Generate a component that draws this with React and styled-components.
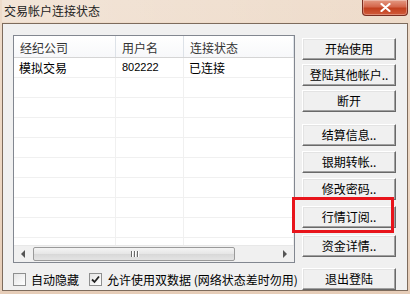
import styled, { createGlobalStyle } from "styled-components";

const GlobalStyle = createGlobalStyle`
  body {
    margin: 0;
    font-family: "Noto Sans CJK SC", "DejaVu Sans", sans-serif;
  }
`;

const columns = [
  { title: "经纪公司", width: 102 },
  { title: "用户名", width: 68 },
  { title: "连接状态", width: 110 },
];

const rows = [["模拟交易", "802222", "已连接"]];

const buttons = [
  { label: "开始使用", gap: 0 },
  { label: "登陆其他帐户..", gap: 4 },
  { label: "断开", gap: 4 },
  { label: "结算信息..", gap: 12 },
  { label: "银期转帐..", gap: 5 },
  { label: "修改密码..", gap: 5 },
  { label: "行情订阅..", gap: 6, marked: true },
  { label: "资金详情..", gap: 7 },
  { label: "退出登陆", gap: 11 },
];

export default function App() {
  return (
    <>
      <GlobalStyle />
      <Window>
        <TitleBar>
          <Title>交易帐户连接状态</Title>
          <CloseButton>
            <svg width="11" height="9" viewBox="0 0 11 9">
              <path
                d="M1.5 1 L9.5 8 M9.5 1 L1.5 8"
                stroke="#fff"
                strokeWidth="2.2"
                strokeLinecap="round"
              />
            </svg>
          </CloseButton>
        </TitleBar>
        <Client>
          <LeftColumn>
            <ListView>
              <HeaderRow>
                {columns.map((c) => (
                  <HeaderCell key={c.title} $width={c.width}>
                    {c.title}
                  </HeaderCell>
                ))}
              </HeaderRow>
              <Rows>
                {Array.from({ length: 10 }).map((_, i) => (
                  <Row key={i}>
                    {columns.map((c, j) => (
                      <Cell key={c.title} $width={c.width} $latin={j === 1}>
                        {rows[i] ? rows[i][j] : ""}
                      </Cell>
                    ))}
                  </Row>
                ))}
              </Rows>
              <ScrollBar>
                <ArrowBox>
                  <ArrowLeft />
                </ArrowBox>
                <Thumb>
                  <Grip />
                  <Grip />
                  <Grip />
                </Thumb>
                <Track />
                <ArrowBox>
                  <ArrowRight />
                </ArrowBox>
              </ScrollBar>
            </ListView>
            <OptionRow>
              <Option>
                <CheckBox />
                自动隐藏
              </Option>
              <Option>
                <CheckBox>
                  <svg width="9" height="9" viewBox="0 0 9 9">
                    <path
                      d="M1 4.5 L3.5 7 L8 1.5"
                      stroke="#222"
                      strokeWidth="1.8"
                      fill="none"
                    />
                  </svg>
                </CheckBox>
                允许使用双数据 (网络状态差时勿用)
              </Option>
            </OptionRow>
          </LeftColumn>
          <ButtonColumn>
            {buttons.map((b) => (
              <ButtonSlot key={b.label} $gap={b.gap} $marked={b.marked}>
                <ActionButton>{b.label}</ActionButton>
              </ButtonSlot>
            ))}
          </ButtonColumn>
        </Client>
      </Window>
    </>
  );
}

const Window = styled.div`
  width: 410px;
  height: 294px;
  box-sizing: border-box;
  display: flex;
  flex-direction: column;
  background: linear-gradient(180deg, #eedccb 0%, #ecd6c2 60%, #e6cdb8 100%);
  padding: 0 2px 3px 2px;
`;

const TitleBar = styled.div`
  height: 22px;
  display: flex;
  align-items: flex-start;
  justify-content: space-between;
  background: linear-gradient(90deg, rgba(255, 255, 255, 0.25), rgba(255, 255, 255, 0));
`;

const Title = styled.div`
  font-size: 12px;
  line-height: 14px;
  margin: 4px 0 0 2px;
  color: #222;
`;

const CloseButton = styled.div`
  width: 46px;
  height: 16px;
  box-sizing: border-box;
  border: 1px solid #7a2e21;
  border-top: none;
  border-radius: 0 0 4px 4px;
  background: linear-gradient(180deg, #e49a83 0%, #d4674c 45%, #c2401f 55%, #d15b3a 100%);
  display: flex;
  align-items: center;
  justify-content: center;
  box-shadow: inset 0 0 0 1px rgba(255, 255, 255, 0.3);
`;

const Client = styled.div`
  flex: 1;
  display: flex;
  margin-top: 1px;
  border: 1px solid #7d6b5c;
  background: #f0f0f0;
  padding: 11px 0 0 10px;
  gap: 7px;
  overflow: hidden;
`;

const LeftColumn = styled.div`
  width: 282px;
  display: flex;
  flex-direction: column;
`;

const ListView = styled.div`
  height: 228px;
  flex: none;
  box-sizing: border-box;
  border: 1px solid #828790;
  background: #fff;
  display: flex;
  flex-direction: column;
  overflow: hidden;
`;

const HeaderRow = styled.div`
  display: flex;
  height: 21px;
  flex: none;
  border-bottom: 1px solid #d5d5d5;
  background: linear-gradient(180deg, #ffffff, #f7f8fa);
`;

const HeaderCell = styled.div`
  width: ${(p) => p.$width}px;
  flex: none;
  box-sizing: border-box;
  border-right: 1px solid #dde2e8;
  padding-left: 6px;
  font-size: 12px;
  line-height: 23px;
  color: #333;
`;

const Rows = styled.div`
  flex: 1;
  overflow: hidden;
`;

const Row = styled.div`
  display: flex;
  height: 19px;
  border-bottom: 1px solid #f0f0f0;
`;

const Cell = styled.div`
  width: ${(p) => p.$width}px;
  flex: none;
  box-sizing: border-box;
  border-right: 1px solid #f0f0f0;
  padding-left: ${(p) => (p.$latin ? 6 : 5)}px;
  font-size: ${(p) => (p.$latin ? 11 : 12)}px;
  font-family: ${(p) =>
    p.$latin ? '"Liberation Sans", Arial, sans-serif' : "inherit"};
  line-height: 19px;
  color: #000;
`;

const ScrollBar = styled.div`
  height: 16px;
  flex: none;
  display: flex;
  background: #f0f0f0;
  border-top: 1px solid #e8e8e8;
`;

const ArrowBox = styled.div`
  width: 18px;
  display: flex;
  align-items: center;
  justify-content: center;
`;

const ArrowLeft = styled.div`
  width: 0;
  height: 0;
  border-top: 4px solid transparent;
  border-bottom: 4px solid transparent;
  border-right: 4px solid #555;
`;

const ArrowRight = styled.div`
  width: 0;
  height: 0;
  border-top: 4px solid transparent;
  border-bottom: 4px solid transparent;
  border-left: 4px solid #555;
`;

const Thumb = styled.div`
  width: 202px;
  margin: 1px 0 1px 1px;
  box-sizing: border-box;
  border: 1px solid #9a9a9a;
  border-radius: 2px;
  background: linear-gradient(180deg, #f4f4f4 0%, #e6e6e6 50%, #d8d8d8 51%, #e4e4e4 100%);
  display: flex;
  align-items: center;
  justify-content: center;
  gap: 2px;
`;

const Grip = styled.div`
  width: 1px;
  height: 6px;
  background: #6a6a6a;
  box-shadow: 1px 0 0 #fff;
`;

const Track = styled.div`
  flex: 1;
`;

const OptionRow = styled.div`
  display: flex;
  align-items: center;
  gap: 10px;
  margin-top: 8px;
  font-size: 12px;
  color: #000;
  white-space: nowrap;
`;

const Option = styled.label`
  display: flex;
  align-items: center;
  gap: 5px;
`;

const CheckBox = styled.span`
  width: 13px;
  height: 13px;
  box-sizing: border-box;
  border: 1px solid #8e8f8f;
  background: linear-gradient(135deg, #e5e5e5, #fff);
  display: flex;
  align-items: center;
  justify-content: center;
`;

const ButtonColumn = styled.div`
  width: 94px;
  display: flex;
  flex-direction: column;
`;

const ButtonSlot = styled.div`
  position: relative;
  margin-top: ${(p) => p.$gap}px;
  height: 22px;

  &::after {
    content: "";
    display: ${(p) => (p.$marked ? "block" : "none")};
    position: absolute;
    left: -10px;
    right: 2px;
    top: -6px;
    bottom: -8px;
    border: 3px solid #e8141b;
    pointer-events: none;
  }
`;

const ActionButton = styled.button`
  width: 94px;
  height: 22px;
  padding: 0;
  box-sizing: border-box;
  border: 1px solid;
  border-color: #fff #696969 #696969 #fff;
  box-shadow: inset -1px -1px 0 #a0a0a0, inset 1px 1px 0 #e3e3e3;
  background: #f0f0f0;
  font-family: inherit;
  font-size: 12px;
  color: #000;
  white-space: nowrap;
`;
